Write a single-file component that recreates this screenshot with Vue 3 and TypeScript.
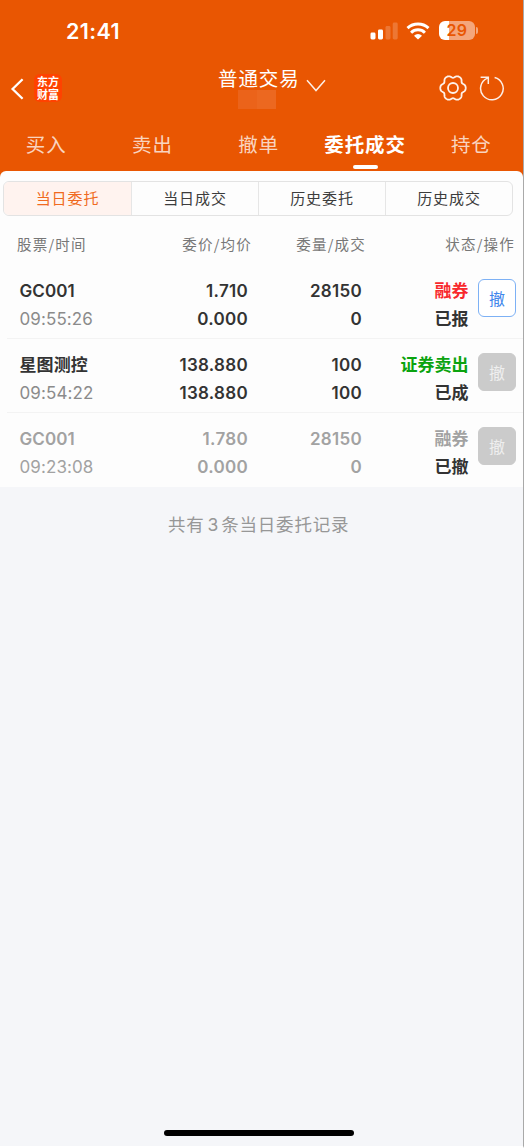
<script setup lang="ts">
interface Tab {
  label: string
  active?: boolean
}

interface Order {
  name: string
  time: string
  price: string
  average: string
  quantity: string
  filled: string
  side: string
  tone: 'buy' | 'sell' | 'muted'
  status: string
  cancellable: boolean
}

const tabs: Tab[] = [
  { label: '买入' },
  { label: '卖出' },
  { label: '撤单' },
  { label: '委托成交', active: true },
  { label: '持仓' },
]

const segments: Tab[] = [
  { label: '当日委托', active: true },
  { label: '当日成交' },
  { label: '历史委托' },
  { label: '历史成交' },
]

const columns: string[] = ['股票/时间', '委价/均价', '委量/成交', '状态/操作']

const orders: Order[] = [
  { name: 'GC001', time: '09:55:26', price: '1.710', average: '0.000', quantity: '28150', filled: '0', side: '融券', tone: 'buy', status: '已报', cancellable: true },
  { name: '星图测控', time: '09:54:22', price: '138.880', average: '138.880', quantity: '100', filled: '100', side: '证券卖出', tone: 'sell', status: '已成', cancellable: false },
  { name: 'GC001', time: '09:23:08', price: '1.780', average: '0.000', quantity: '28150', filled: '0', side: '融券', tone: 'muted', status: '已撤', cancellable: false },
]

// Six-lobed outline of the settings gear
const gearPath: string =
  'M' +
  Array.from({ length: 120 }, (_, i) => {
    const angle = (i * Math.PI) / 60
    const radius = 11.7 + 1.25 * Math.cos(6 * angle) - 0.25 * Math.cos(12 * angle)
    return `${(radius * Math.cos(angle)).toFixed(2)} ${(radius * Math.sin(angle)).toFixed(2)}`
  }).join('L') +
  'Z'
</script>

<template>
  <div class="screen">
    <header class="top">
      <div class="status-bar">
        <span class="clock">21:41</span>
        <div class="indicators">
          <svg class="signal" width="28" height="18" viewBox="0 0 28 18">
            <rect x="0.5" y="10.5" width="5" height="7" rx="1.4" fill="#fff" />
            <rect x="8" y="7.5" width="5" height="10" rx="1.4" fill="#fff" />
            <rect x="15.5" y="4" width="5" height="13.5" rx="1.4" fill="#fff" opacity=".2" />
            <rect x="22.7" y="0.5" width="5" height="17" rx="1.4" fill="#fff" opacity=".2" />
          </svg>
          <svg class="wifi" width="24" height="18" viewBox="0 0 24 18">
            <g fill="none" stroke="#fff" stroke-width="3">
              <path d="M1.500 6.200A15.500 15.500 0 0 1 22.500 6.200" />
              <path d="M5.100 10.700A9.800 9.800 0 0 1 18.900 10.700" />
            </g>
            <path d="M12 17.400L8 13.700A5.800 5.800 0 0 1 16 13.700Z" fill="#fff" />
          </svg>
          <div class="battery"><span class="battery-body">29</span><span class="battery-tip"></span></div>
        </div>
      </div>

      <div class="nav">
        <svg class="back" width="14" height="22" viewBox="0 0 14 22">
          <path d="M12.600 1.200L2.600 11L12.600 20.800" fill="none" stroke="#fff" stroke-width="2.300" />
        </svg>
        <div class="brand">东方<br>财富</div>
        <div class="account">
          <div class="title">普通交易</div>
          <div class="masked"><i></i><i></i></div>
        </div>
        <svg class="chevron" width="20" height="14" viewBox="0 0 20 14">
          <path d="M1 1.300L10 11.500L19 1.300" fill="none" stroke="#fff" stroke-opacity=".9" stroke-width="1.500" />
        </svg>
        <svg class="gear" width="30" height="28" viewBox="-15 -14 30 28">
          <path :d="gearPath" fill="none" stroke="#fff" stroke-opacity=".92" stroke-width="1.800" stroke-linejoin="round" />
          <circle r="5" fill="none" stroke="#fff" stroke-opacity=".92" stroke-width="1.800" />
        </svg>
        <svg class="refresh" width="26" height="26" viewBox="0 0 26 26">
          <path d="M15.600 2.500A11.300 11.300 0 1 1 8.400 3.100M1.600 2.200H9.300V8.900" fill="none" stroke="#fff" stroke-opacity=".9" stroke-width="1.500" />
        </svg>
      </div>

      <nav class="tabs">
        <span v-for="tab in tabs" :key="tab.label" class="tab" :class="{ active: tab.active }">{{ tab.label }}</span>
      </nav>
    </header>

    <main class="panel">
      <div class="segments">
        <span v-for="item in segments" :key="item.label" class="segment" :class="{ active: item.active }">{{ item.label }}</span>
      </div>
      <div class="columns">
        <span v-for="column in columns" :key="column">{{ column }}</span>
      </div>
      <div v-for="order in orders" :key="order.time" class="order" :class="order.tone">
        <div class="cell stock"><b>{{ order.name }}</b><span>{{ order.time }}</span></div>
        <div class="cell"><b>{{ order.price }}</b><b>{{ order.average }}</b></div>
        <div class="cell"><b>{{ order.quantity }}</b><b>{{ order.filled }}</b></div>
        <div class="cell state"><b class="side">{{ order.side }}</b><b class="status">{{ order.status }}</b></div>
        <button class="cancel" :disabled="!order.cancellable">撤</button>
      </div>
    </main>

    <p class="summary">共有<span>3</span>条当日委托记录</p>
    <div class="home-bar"></div>
  </div>
</template>

<style>
body {
  background: #fff;
}
</style>

<style scoped>
.screen {
  box-sizing: border-box;
  width: 524px;
  height: 1148px;
  display: flex;
  flex-direction: column;
  border-right: 1px solid #a9a9a9;
  border-bottom: 2px solid #fff;
  background: linear-gradient(#e95602 190px, #f5f6f9 190px);
  font-family: Inter, "Noto Sans CJK SC", sans-serif;
  color: #333;
  overflow: hidden;
}

.top {
  height: 171px;
  flex: none;
  color: #fff;
}

.status-bar {
  height: 62px;
  display: flex;
  justify-content: space-between;
  padding: 0 45px 0 66px;
}

.clock {
  font-size: 21.500px;
  font-weight: 600;
  letter-spacing: 0.400px;
  line-height: 63px;
}

.indicators {
  display: flex;
  align-items: flex-start;
  padding-top: 22px;
}

.wifi {
  margin: 0 9px 0 8.500px;
}

.battery {
  display: flex;
  align-items: center;
  margin-top: -1px;
}

.battery-body {
  width: 36px;
  height: 19px;
  border-radius: 6px;
  background: linear-gradient(90deg, #fff 10px, #f4a67c 10px);
  color: #e95602;
  font-size: 16px;
  font-weight: 600;
  letter-spacing: 0.500px;
  line-height: 19px;
  text-align: center;
}

.battery-tip {
  width: 2px;
  height: 7px;
  margin-left: 1px;
  border-radius: 0 3px 3px 0;
  background: #f4a67c;
}

.nav {
  height: 56px;
  display: flex;
  align-items: flex-start;
}

.back {
  margin: 16px 10px 0 10px;
}

.brand {
  width: 28px;
  height: 28px;
  margin-top: 12px;
  box-sizing: border-box;
  padding-top: 1px;
  border-radius: 6px;
  background: #ff4200;
  font: 700 11px/12.500px "Noto Sans CJK SC", sans-serif;
  text-align: center;
}

.account {
  margin-left: 156px;
  width: 81px;
}

.title {
  margin-top: 6px;
  font-size: 19.500px;
  letter-spacing: 0.900px;
  line-height: 22px;
  white-space: nowrap;
}

.masked {
  display: flex;
  margin-left: 20px;
}

.masked i {
  width: 19px;
  height: 19px;
  background: #eb631a;
}

.masked i + i {
  background: #ec6820;
}

.chevron {
  margin: 17px 0 0 7px;
}

.gear {
  margin: 12px 0 0 112px;
}

.refresh {
  margin: 13px 0 0 11px;
}

.tabs {
  display: grid;
  grid-template-columns: repeat(5, 106.300px);
  margin-left: -7px;
}

.tab {
  height: 53px;
  display: flex;
  flex-direction: column;
  align-items: center;
  color: rgba(255, 255, 255, 0.76);
  font-size: 19.500px;
  letter-spacing: 0.900px;
  line-height: 54px;
  white-space: nowrap;
}

.tab.active {
  color: #fff;
  font-weight: 600;
}

.tab.active::after {
  content: "";
  width: 25px;
  height: 4px;
  margin-top: -7px;
  flex: none;
  border-radius: 2px;
  background: #fff;
}

.panel {
  height: 315.500px;
  flex: none;
  box-sizing: border-box;
  padding-top: 10px;
  border-radius: 6px 6px 0 0;
  background: #fdfdfd;
}

.segments {
  box-sizing: border-box;
  width: 510px;
  height: 35px;
  margin-left: 3px;
  display: grid;
  grid-template-columns: repeat(4, 1fr);
  border: 1px solid #e3e3e3;
  border-radius: 6px;
  overflow: hidden;
}

.segment {
  color: #3c3c3c;
  font-size: 15px;
  letter-spacing: 0.900px;
  line-height: 34px;
  text-align: center;
}

.segment + .segment {
  border-left: 1px solid #e6e6e6;
}

.segment.active {
  background: #fff3ef;
  color: #f06a20;
}

.columns {
  height: 49px;
  padding-top: 3px;
  box-sizing: border-box;
  display: grid;
  grid-template-columns: 125px 110px 114px 149px;
  padding-left: 17px;
  color: #777;
  font-size: 14.500px;
  font-family: "Noto Sans CJK SC", sans-serif;
  letter-spacing: 1.200px;
  line-height: 50px;
  text-align: right;
}

.columns span:first-child {
  text-align: left;
}

.order {
  height: 74px;
  margin-left: 7px;
  padding: 11.500px 0 0 12.500px;
  box-sizing: border-box;
  display: grid;
  grid-template-columns: 118px 110.500px 114px 106.500px 38px;
  border-bottom: 1px solid #f3f3f3;
}

.order:last-child {
  border-bottom: 0;
}

.cell {
  display: flex;
  flex-direction: column;
  align-items: flex-end;
  font-size: 17px;
  letter-spacing: 0.300px;
  line-height: 28.500px;
  white-space: nowrap;
}

.cell b {
  font-weight: 600;
}

.stock {
  align-items: flex-start;
  letter-spacing: 0.100px;
}

.stock span {
  color: #8b8b8b;
}

.state {
  color: #333;
  letter-spacing: 0;
}

.buy .side {
  color: #f8292d;
}

.sell .side {
  color: #0ba30f;
}

.muted .cell,
.muted .stock span {
  color: #a2a2a2;
}

.muted .status {
  color: #333;
}

.cancel {
  width: 38px;
  height: 38px;
  margin: 2.500px 0 0 9.500px;
  padding: 0;
  border: 1.500px solid #7db1f5;
  border-radius: 6px;
  background: #fff;
  color: #3f86ec;
  font: 16px/34px "Noto Sans CJK SC", sans-serif;
}

.cancel:disabled {
  border-color: #cbcbcb;
  background: #cbcbcb;
  color: #efefef;
}

.summary {
  margin: 24px 0 0 168px;
  color: #979797;
  font-size: 17.500px;
  letter-spacing: 0.800px;
  line-height: 27px;
}

.summary span {
  margin: 0 2px 0 3px;
}

.home-bar {
  width: 190px;
  height: 6px;
  margin: auto 0 10px 164px;
  border-radius: 3px;
  background: #000;
}
</style>
